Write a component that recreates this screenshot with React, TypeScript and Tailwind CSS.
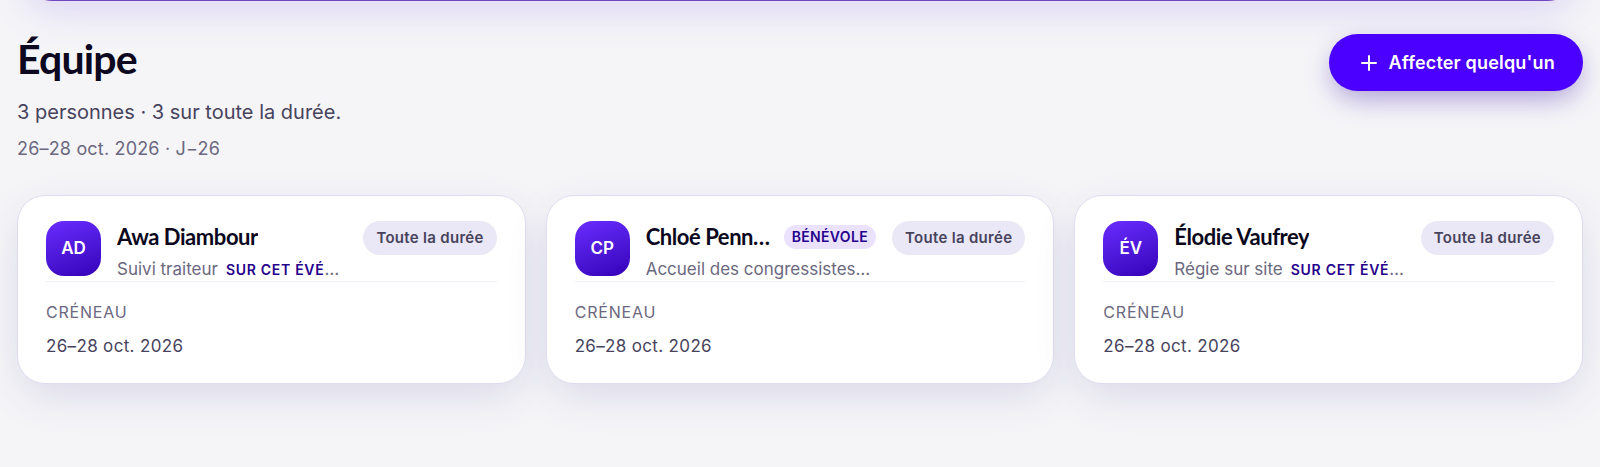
import React from 'react';
import { Plus } from 'lucide-react';

interface Member {
  initials: string;
  name: string;
  role: string;
  volunteer?: boolean;
  slot: string;
}

const members: Member[] = [
  { initials: 'AD', name: 'Awa Diambour', role: 'Suivi traiteur', slot: '26–28 oct. 2026' },
  { initials: 'CP', name: 'Chloé Pennarun', role: 'Accueil des congressistes', volunteer: true, slot: '26–28 oct. 2026' },
  { initials: 'ÉV', name: 'Élodie Vaufrey', role: 'Régie sur site', slot: '26–28 oct. 2026' },
];

function MemberCard({ member }: { member: Member }) {
  return (
    <li className="min-w-0 rounded-[28px] border border-[#dfdcf0] bg-white px-7 pt-[25px] pb-[21px] shadow-[0_14px_44px_-4px_rgba(40,20,120,0.13)]">
      <div className="flex h-[61px] items-start gap-4 border-b border-[#f0eff5]">
        <div className="flex h-[55px] w-[55px] shrink-0 items-center justify-center rounded-[18px] bg-linear-160 from-[#6a2bff] to-[#3500b8] text-[17px] font-semibold text-white">
          {member.initials}
        </div>
        <div className="min-w-0 flex-1">
          <div className="flex h-8 items-center gap-3">
            <h2 className="truncate font-['Lato',sans-serif] text-[22px] leading-8 font-bold tracking-[-0.02em] text-[#0b0820]">{member.name}</h2>
            {member.volunteer && (
              <span className="shrink-0 rounded-full bg-[#ebe2ff] px-2 text-sm leading-6 font-semibold tracking-wide text-[#26008a]">
                BÉNÉVOLE
              </span>
            )}
          </div>
          <p className="truncate text-[17px] leading-8 text-[#6b6880]">
            {member.role}
            <span className="ml-2 text-sm font-semibold tracking-wider text-[#26008a]">SUR CET ÉVÉNEMENT</span>
          </p>
        </div>
        <span className="shrink-0 rounded-full bg-[#eae7f6] px-[13px] text-[15px] leading-[34px] font-semibold tracking-[0.02em] text-[#47435c]">
          Toute la durée
        </span>
      </div>
      <dl className="pt-[14px]">
        <dt className="text-base leading-8 tracking-wider text-[#6b6880]">CRÉNEAU</dt>
        <dd className="mt-[2px] text-[17px] leading-8 tracking-[0.02em] text-[#47435c]">{member.slot}</dd>
      </dl>
    </li>
  );
}

export default function App() {
  return (
    <div className="min-h-screen overflow-hidden bg-[#f5f5f8] px-[17px] pb-20 font-['Inter',sans-serif]">
      {/* bottom edge of the event banner */}
      <div className="-mt-[79px] h-20 rounded-[36px] bg-[#7446c4] shadow-[0_16px_40px_-8px_rgba(80,30,220,0.16)]" />

      <header className="flex items-start justify-between pt-8">
        <div>
          <h1 className="font-['Lato',sans-serif] text-[41px] leading-[52px] font-bold tracking-[-0.02em] text-[#0b0820]">Équipe</h1>
          <p className="mt-[9px] text-xl leading-9 text-[#47435c]">3 personnes · 3 sur toute la durée.</p>
          <p className="mt-px text-lg leading-9 tracking-[0.01em] text-[#6b6880]">26–28 oct. 2026 · J−26</p>
        </div>
        <button
          type="button"
          className="mt-px flex h-[57px] items-center gap-2 rounded-full bg-[#4b00ff] px-7 text-lg font-semibold tracking-[0.01em] text-white shadow-[0_10px_28px_-4px_rgba(50,10,160,0.4)]"
        >
          <Plus className="size-6" strokeWidth={2} />
          Affecter quelqu'un
        </button>
      </header>

      <ul className="mt-7 grid grid-cols-3 gap-5">
        {members.map((member) => (
          <MemberCard key={member.initials} member={member} />
        ))}
      </ul>
    </div>
  );
}
